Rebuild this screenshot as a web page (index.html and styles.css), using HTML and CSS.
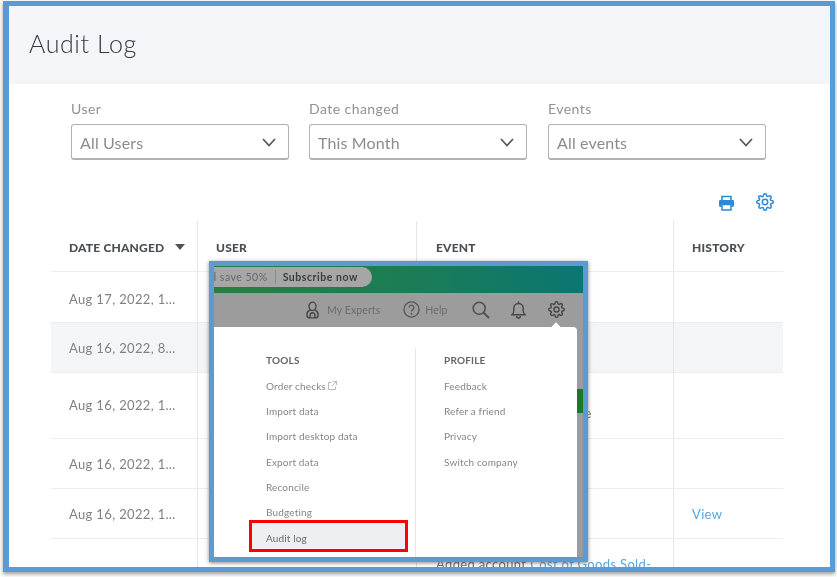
FILE: index.html
```html
<!DOCTYPE html>
<html lang="en">
<head>
<meta charset="utf-8">
<title>Audit Log</title>
<link rel="stylesheet" href="styles.css">
</head>
<body>
<svg class="defs" width="0" height="0" aria-hidden="true">
  <symbol id="gear" viewBox="0 0 24 24">
    <circle cx="12" cy="12" r="3.6" fill="none" stroke="currentColor" stroke-width="2"/>
    <path fill="none" stroke="currentColor" stroke-width="2" d="M19.4 15a1.65 1.65 0 0 0 .33 1.82l.06.06a2 2 0 0 1 0 2.83 2 2 0 0 1-2.83 0l-.06-.06a1.65 1.65 0 0 0-1.82-.33 1.65 1.65 0 0 0-1 1.51V21a2 2 0 0 1-2 2 2 2 0 0 1-2-2v-.09A1.65 1.65 0 0 0 9 19.4a1.65 1.65 0 0 0-1.82.33l-.06.06a2 2 0 0 1-2.83 0 2 2 0 0 1 0-2.83l.06-.06a1.65 1.65 0 0 0 .33-1.82 1.65 1.65 0 0 0-1.51-1H3a2 2 0 0 1-2-2 2 2 0 0 1 2-2h.09A1.65 1.65 0 0 0 4.6 9a1.65 1.65 0 0 0-.33-1.82l-.06-.06a2 2 0 0 1 0-2.83 2 2 0 0 1 2.83 0l.06.06a1.65 1.65 0 0 0 1.82.33H9a1.65 1.65 0 0 0 1-1.51V3a2 2 0 0 1 2-2 2 2 0 0 1 2 2v.09a1.65 1.65 0 0 0 1 1.51 1.65 1.65 0 0 0 1.82-.33l.06-.06a2 2 0 0 1 2.83 0 2 2 0 0 1 0 2.83l-.06.06a1.65 1.65 0 0 0-.33 1.82V9a1.65 1.65 0 0 0 1.51 1H21a2 2 0 0 1 2 2 2 2 0 0 1-2 2h-.09a1.65 1.65 0 0 0-1.51 1z"/>
  </symbol>
  <symbol id="chevron" viewBox="0 0 14 9">
    <path d="M1 1l6 6.5L13 1" fill="none" stroke="currentColor" stroke-width="1.8"/>
  </symbol>
</svg>

<div class="frame">
  <div class="content">
    <header class="title-band"><h1 class="title">Audit Log</h1></header>

    <section class="filters">
      <div class="filter">
        <span class="filter-label">User</span>
        <div class="select"><span>All Users</span><svg class="chevron"><use href="#chevron"/></svg></div>
      </div>
      <div class="filter">
        <span class="filter-label">Date changed</span>
        <div class="select"><span>This Month</span><svg class="chevron"><use href="#chevron"/></svg></div>
      </div>
      <div class="filter">
        <span class="filter-label">Events</span>
        <div class="select"><span>All events</span><svg class="chevron"><use href="#chevron"/></svg></div>
      </div>
    </section>

    <div class="toolbar">
      <svg class="tool-print" viewBox="0 0 17 16">
        <path d="M4 5V1.5h9V5" fill="none" stroke="currentColor" stroke-width="1.6"/>
        <path d="M3.5 12H2.4A1.4 1.4 0 0 1 1 10.600V6.400A1.400 1.400 0 0 1 2.400 5h12.200A1.400 1.400 0 0 1 16 6.400v4.200a1.400 1.400 0 0 1-1.400 1.400H13.500V9h-10z" fill="currentColor"/>
        <path d="M4 9.500h9v5.500H4z" fill="none" stroke="currentColor" stroke-width="1.500"/>
      </svg>
      <svg class="tool-gear"><use href="#gear"/></svg>
    </div>

    <div class="table">
      <div class="row row-head">
        <div class="cell">Date changed <span class="sort"></span></div>
        <div class="cell">User</div>
        <div class="cell cell-third">Event</div>
        <div class="cell">History</div>
      </div>
      <div class="row row-51">
        <div class="cell">Aug 17, 2022, 1…</div><div class="cell"></div><div class="cell"></div><div class="cell"></div>
      </div>
      <div class="row row-50 row-hover">
        <div class="cell">Aug 16, 2022, 8…</div><div class="cell"></div><div class="cell"></div><div class="cell"></div>
      </div>
      <div class="row row-66">
        <div class="cell">Aug 16, 2022, 1…</div><div class="cell"></div>
        <div class="cell cell-peek"><span class="peek">e</span></div><div class="cell"></div>
      </div>
      <div class="row row-50">
        <div class="cell">Aug 16, 2022, 1…</div><div class="cell"></div><div class="cell"></div><div class="cell"></div>
      </div>
      <div class="row row-50">
        <div class="cell">Aug 16, 2022, 1…</div><div class="cell"></div><div class="cell"></div>
        <div class="cell"><a class="link">View</a></div>
      </div>
      <div class="row row-last">
        <div class="cell">Aug 16, 2022, 1…</div><div class="cell"></div>
        <div class="cell cell-third cell-event">Added account <a class="link">Cost of Goods Sold-</a></div><div class="cell"></div>
      </div>
    </div>
  </div>

  <div class="popup">
    <div class="popup-body">
      <div class="promo">
        <div class="pill"><span class="pill-save">d save 50%</span><span class="pill-cta">Subscribe now</span></div>
      </div>
      <nav class="nav">
        <span class="nav-item nav-experts">
          <svg class="nav-person" viewBox="0 0 14 19">
            <ellipse cx="7" cy="5.500" rx="3.800" ry="4.500" fill="none" stroke="currentColor" stroke-width="1.500"/>
            <path d="M4.500 9.500C2 10.500 1 12 1 14.500c0 2 .8 3.500 2.800 3.500h6.400c2 0 2.800-1.500 2.800-3.500 0-2.500-1-4-3.500-5M7 12.500a2.500 2.500 0 0 0-2.500 2.500v3M7 12.500A2.500 2.500 0 0 1 9.500 15v3" fill="none" stroke="currentColor" stroke-width="1.500"/>
          </svg>
          My Experts
        </span>
        <span class="nav-item nav-help">
          <svg class="nav-circle" viewBox="0 0 18 18">
            <circle cx="9" cy="9" r="8" fill="none" stroke="currentColor" stroke-width="1.400"/>
            <path d="M6.500 7a2.500 2.500 0 1 1 3.800 2.100C9.400 9.700 9 10.200 9 11.200" fill="none" stroke="currentColor" stroke-width="1.400"/>
            <circle cx="9" cy="13.500" r="1" fill="currentColor"/>
          </svg>
          Help
        </span>
        <svg class="nav-search" viewBox="0 0 18 18">
          <circle cx="7.200" cy="7.200" r="6" fill="none" stroke="currentColor" stroke-width="1.600"/>
          <path d="M11.500 11.500L17 17" stroke="currentColor" stroke-width="1.800"/>
        </svg>
        <svg class="nav-bell" viewBox="0 0 16 18">
          <path d="M1 14c1.500-1 2-2.500 2-4.500V7a5 5 0 0 1 10 0v2.500c0 2 .5 3.500 2 4.500z" fill="none" stroke="currentColor" stroke-width="1.500"/>
          <path d="M6 15.500a2 2 0 0 0 4 0M8 0v2" fill="none" stroke="currentColor" stroke-width="1.500"/>
        </svg>
        <svg class="nav-gear"><use href="#gear"/></svg>
      </nav>
      <div class="menu">
        <div class="menu-col menu-tools">
          <h2 class="menu-head">TOOLS</h2>
          <span class="menu-item">Order checks
            <svg class="ext" viewBox="0 0 9 9"><path d="M3.500 1.500H.5v7h7v-3M5 .5h3.500V4M8.500.5L4 5" fill="none" stroke="currentColor" stroke-width=".8"/></svg>
          </span>
          <span class="menu-item">Import data</span>
          <span class="menu-item">Import desktop data</span>
          <span class="menu-item">Export data</span>
          <span class="menu-item">Reconcile</span>
          <span class="menu-item">Budgeting</span>
          <span class="menu-item menu-active"><span class="menu-active-label">Audit log</span></span>
        </div>
        <div class="menu-col menu-profile">
          <h2 class="menu-head">PROFILE</h2>
          <span class="menu-item">Feedback</span>
          <span class="menu-item">Refer a friend</span>
          <span class="menu-item">Privacy</span>
          <span class="menu-item">Switch company</span>
        </div>
      </div>
      <div class="badge"></div>
    </div>
  </div>
</div>
</body>
</html>
```

FILE: styles.css
```css
* { box-sizing: border-box; }
html, body { margin: 0; padding: 0; background: #fff; }
body { width: 837px; height: 577px; overflow: hidden; font-family: "Lato", "Liberation Sans", sans-serif; }
.defs { position: absolute; }

.frame {
  position: relative;
  width: 832px;
  height: 571px;
  margin: 1px 0 0 3px;
  border: 5px solid #5b9bd5;
  border-left-width: 6px;
  box-shadow: 0 2px 4px rgba(70, 70, 70, .55), inset 0 0 1px #3f7fb8;
}
.content { height: 561px; overflow: hidden; filter: blur(.6px); background: #fff; }

.title-band { height: 78px; background: #f4f5f9; display: flex; align-items: center; padding: 0 0 4px 20px; }
.title { margin: 0; font-size: 25px; font-weight: 300; color: #33383f; letter-spacing: .6px; }

.filters { display: flex; gap: 20px; padding: 16px 0 0 62px; }
.filter { width: 218px; display: flex; flex-direction: column; gap: 6px; }
.filter:last-child { margin-left: 1px; }
.filter-label { height: 18px; line-height: 18px; font-size: 14px; color: #8f9297; letter-spacing: .45px; }
.select {
  height: 36px;
  display: flex;
  align-items: center;
  justify-content: space-between;
  padding: 1px 12px 0 8px;
  border: 1px solid #b0b2b5;
  border-bottom-width: 2px;
  border-radius: 3px;
  font-size: 16px;
  color: #8a8c90;
  letter-spacing: .15px;
}
.chevron { width: 14px; height: 9px; color: #555a5e; }

.toolbar { display: flex; justify-content: flex-end; align-items: center; gap: 21px; padding: 33px 56px 10px 0; }
.tool-print { width: 17px; height: 16px; color: #2a8ad6; margin-top: 1px; }
.tool-gear { width: 18px; height: 18px; color: #2a8ad6; }

.table { width: 732px; margin-left: 42px; }
.row { display: grid; grid-template-columns: 147px 219px 257px 109px; border-bottom: 1px solid #ededed; }
.row-head { height: 51px; }
.row-51 { height: 51px; }
.row-50 { height: 50px; }
.row-66 { height: 66px; }
.row-last { height: 80px; border-bottom: 0; }
.row-hover { background: #f4f5f9; }
.cell {
  display: flex;
  align-items: center;
  padding-left: 18px;
  font-size: 13px;
  color: #7f8185;
  letter-spacing: .35px;
  border-right: 1px solid #e6e6e6;
}
.cell:last-child { border-right: 0; }
.row-51 .cell { padding-top: 4px; }
.row-66 .cell { padding-bottom: 2px; }
.row-head .cell {
  padding-top: 2px;
  font-size: 12px;
  font-weight: 900;
  color: #4a4d52;
  text-transform: uppercase;
  letter-spacing: .2px;
}
.row-head .cell-third, .cell-third { padding-left: 19px; }
.sort {
  width: 0;
  height: 0;
  margin-left: 11px;
  border-left: 5.500px solid transparent;
  border-right: 5.500px solid transparent;
  border-top: 6px solid #4f5257;
}
.row-66 .cell-peek { align-items: flex-end; padding: 0 0 15px 167px; line-height: 20px; font-size: 14px; }
.cell-event { align-items: flex-start; padding-top: 15px; font-size: 13px; line-height: 20px; white-space: nowrap; color: #6c6e72; gap: 4px; letter-spacing: .35px; }
.link { color: #58a6df; }

.popup {
  position: absolute;
  left: 200px;
  top: 255px;
  width: 379px;
  height: 301px;
  border: 5px solid #5b9bd5;
  box-shadow: 0 1px 4px rgba(60, 60, 60, .6);
}
.popup-body { position: relative; height: 100%; background: #9c9c9c; overflow: hidden; }

.promo { height: 27px; padding-top: 1px; background: linear-gradient(90deg, #2a7f3f 0%, #1c7d55 50%, #0a7671 100%); filter: blur(.5px); }
.pill {
  width: 158px;
  height: 20px;
  display: flex;
  justify-content: flex-end;
  align-items: center;
  gap: 7px;
  padding-right: 14px;
  border-radius: 0 10px 10px 0;
  background: #a6a6a6;
  font-size: 10.500px;
  white-space: nowrap;
  overflow: hidden;
}
.pill-save { color: #676767; letter-spacing: .5px; padding-right: 7px; border-right: 1px solid #8b8b8b; line-height: 14px; }
.pill-cta { color: #3d3d3d; font-weight: 700; letter-spacing: .55px; }

.nav { height: 34px; display: flex; align-items: center; padding: 0 0 1px 92px; color: #474747; background: #9c9c9c; filter: blur(.5px); }
.nav-item { display: flex; align-items: center; font-size: 10.500px; color: #6c6c6c; letter-spacing: .1px; white-space: nowrap; }
.nav-experts { gap: 8px; }
.nav-help { gap: 5px; margin-left: 23px; }
.nav-person { width: 13px; height: 18px; color: #474747; }
.nav-circle { width: 17px; height: 17px; color: #555; }
.nav-search { width: 18px; height: 18px; margin-left: 24px; color: #505050; }
.nav-bell { width: 15px; height: 18px; margin-left: 21px; color: #474747; }
.nav-gear { width: 17px; height: 17px; margin-left: 22px; color: #474747; }

.menu { position: relative; display: flex; width: 363px; height: 230px; background: #fff; border-radius: 0 4px 0 0; }
.menu::before {
  content: "";
  position: absolute;
  left: 338px;
  top: -3px;
  width: 8px;
  height: 8px;
  background: #fff;
  transform: rotate(45deg);
}
.menu-col { display: flex; flex-direction: column; padding-top: 26px; }
.menu-tools { width: 201px; padding-left: 52px; }
.menu-profile { position: relative; padding-left: 29px; }
.menu-profile::before {
  content: "";
  position: absolute;
  left: 0;
  top: 21px;
  bottom: 0;
  border-left: 1px solid #e6e6e6;
}
.menu-head { margin: 0 0 6px; height: 14px; line-height: 14px; font-size: 10px; font-weight: 700; color: #666; letter-spacing: .2px; filter: blur(.4px); }
.menu-item { display: flex; align-items: center; gap: 2px; height: 25.300px; font-size: 10px; color: #858585; letter-spacing: .15px; white-space: nowrap; filter: blur(.4px); }
.ext { width: 9px; height: 9px; color: #a8a8a8; }
.menu-active {
  height: 32px;
  width: 159px;
  margin: -5px 0 0 -17px;
  padding: 5px 0 0 14px;
  border: 3px solid #f00;
  background: #eeeff3;
  color: #6a6a6a;
  filter: none;
}
.menu-active-label { filter: blur(.4px); }
.badge { position: absolute; left: 363px; top: 123px; width: 6px; height: 24px; background: #1d7a22; }
```
